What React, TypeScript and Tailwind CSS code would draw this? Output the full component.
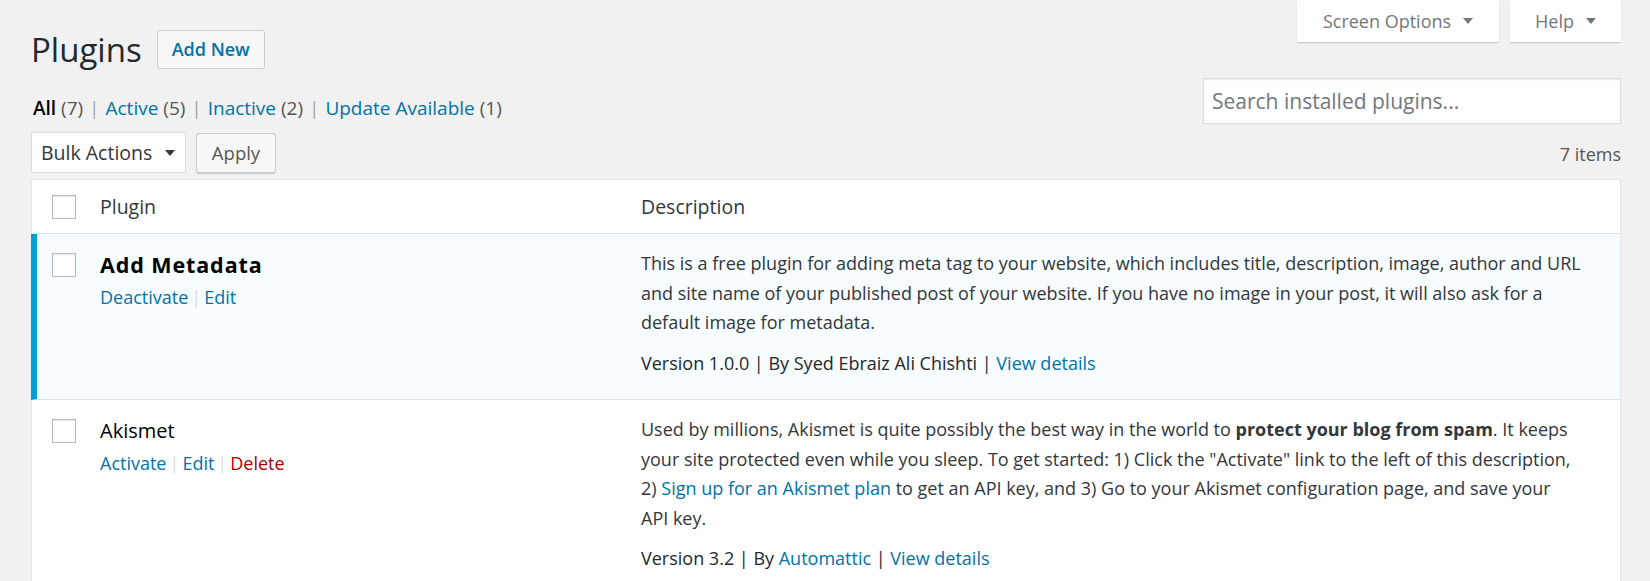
import React from 'react';

function Caret({ className = '' }: { className?: string }) {
  return (
    <svg viewBox="0 0 10 6" className={className} aria-hidden="true">
      <path d="M0 0h10L5 6z" fill="currentColor" />
    </svg>
  );
}

function Checkbox() {
  return (
    <span className="block h-[24px] w-[24px] border border-[#b4b9be] bg-white shadow-[inset_0_1px_2px_rgba(0,0,0,0.1)]" />
  );
}

function Tab({ label, width }: { label: string; width: string }) {
  return (
    <div
      className={`flex h-[42px] ${width} items-center justify-center gap-[12px] bg-white text-[18px] text-[#72777c] shadow-[0_1px_1px_rgba(0,0,0,0.15)]`}
    >
      <span>{label}</span>
      <Caret className="h-[6px] w-[10px] text-[#72777c]" />
    </div>
  );
}

const filters = [
  { label: 'All', count: 7, current: true },
  { label: 'Active', count: 5 },
  { label: 'Inactive', count: 2 },
  { label: 'Update Available', count: 1 },
];

type Action = { label: string; danger?: boolean };

function PluginRow({
  active,
  name,
  actions,
  children,
  meta,
}: {
  active?: boolean;
  name: string;
  actions: Action[];
  children: React.ReactNode;
  meta: React.ReactNode;
}) {
  return (
    <div
      className={
        active
          ? 'flex -ml-px border-b border-l-[6px] border-b-[#dde3e6] border-l-[#00a0d2] bg-[#f7fcfe] pt-[15px] pb-[21px]'
          : 'flex border-b border-[#e1e1e1] pt-[15px] pb-[21px]'
      }
    >
      <div className={active ? 'w-[63px] shrink-0 pl-[15px] pt-[4px]' : 'w-[68px] shrink-0 pl-[20px] pt-[4px]'}>
        <Checkbox />
      </div>
      <div className="w-[541px] shrink-0">
        <div
          className={
            active
              ? 'text-[21.5px] font-bold leading-[31px] tracking-[0.9px] text-[#000]'
              : 'text-[20px] leading-[31px] text-[#000]'
          }
        >
          {name}
        </div>
        <div className="mt-[3px] text-[18px] leading-[29px]">
          {actions.map((a, i) => (
            <React.Fragment key={a.label}>
              {i > 0 && <span className="mx-[3px] text-[#ddd]">|</span>}
              <a className={a.danger ? 'text-[#a00]' : 'text-[#0073aa]'}>{a.label}</a>
            </React.Fragment>
          ))}
        </div>
      </div>
      <div className="min-w-0 flex-1 whitespace-nowrap pr-[15px] text-[18px] leading-[29.5px] text-[#32373c]">
        <p>{children}</p>
        <p className="mt-[11px] text-[#23282d]">{meta}</p>
      </div>
    </div>
  );
}

export default function App() {
  return (
    <div className="min-h-screen bg-[#f1f1f1] pl-[31px] pr-[29px] font-['Open_Sans',sans-serif] text-[#32373c]">
      {/* Title and screen meta tabs */}
      <div className="flex items-start justify-between">
        <div className="mt-[30px] flex items-center">
          <h1 className="text-[33px] leading-[39px] text-[#23282d]">Plugins</h1>
          <button className="ml-[15px] h-[39px] rounded-[3px] border border-[#ccc] bg-[#f7f7f7] px-[14px] text-[18px] font-semibold text-[#0073aa]">
            Add New
          </button>
        </div>
        <div className="flex gap-[11px]">
          <Tab label="Screen Options" width="w-[202px]" />
          <Tab label="Help" width="w-[111px]" />
        </div>
      </div>

      {/* Filters and search */}
      <div className="mt-[9px] flex items-start justify-between">
        <ul className="ml-[2px] mt-[16px] flex text-[19px] leading-[29px] text-[#555]">
          {filters.map((f, i) => (
            <li key={f.label} className="whitespace-pre">
              {i > 0 && <span className="mx-[1px] text-[#a0a5aa]"> | </span>}
              {f.current ? (
                <span className="font-semibold text-[#000]">{f.label}</span>
              ) : (
                <a className="text-[#0073aa]">{f.label}</a>
              )}{' '}
              <span className="text-[#555]">({f.count})</span>
            </li>
          ))}
        </ul>
        <input
          type="search"
          placeholder="Search installed plugins..."
          className="h-[46px] w-[418px] border border-[#ddd] bg-white px-[8px] text-[21px] text-[#32373c] shadow-[inset_0_1px_2px_rgba(0,0,0,0.07)] outline-none placeholder:text-[#72777c]"
        />
      </div>

      {/* Bulk actions */}
      <div className="mt-[8px] flex items-center justify-between">
        <div className="flex items-center">
          <div className="flex h-[41px] w-[155px] items-center justify-between border border-[#ddd] bg-white pl-[9px] pr-[10px] text-[19.5px] text-[#32373c]">
            <span>Bulk Actions</span>
            <Caret className="h-[8px] w-[10px] text-[#32373c]" />
          </div>
          <button className="ml-[10px] h-[40px] w-[80px] rounded-[3px] border border-[#ccc] bg-[#f7f7f7] text-[18.5px] text-[#555] shadow-[0_1px_0_#ccc]">
            Apply
          </button>
        </div>
        <span className="pt-[4px] text-[18px] text-[#555]">7 items</span>
      </div>

      {/* Plugins table */}
      <div className="mt-[6px] border border-[#e5e5e5] bg-white shadow-[0_1px_1px_rgba(0,0,0,0.04)]">
        <div className="flex h-[54px] items-center border-b border-[#e1e1e1] text-[19.5px] text-[#32373c]">
          <div className="w-[68px] shrink-0 pl-[20px]">
            <Checkbox />
          </div>
          <div className="w-[541px] shrink-0">Plugin</div>
          <div>Description</div>
        </div>

        <PluginRow
          active
          name="Add Metadata"
          actions={[{ label: 'Deactivate' }, { label: 'Edit' }]}
          meta={
            <>
              Version 1.0.0 | By Syed Ebraiz Ali Chishti | <a className="text-[#0073aa]">View details</a>
            </>
          }
        >
          This is a free plugin for adding meta tag to your website, which includes title, description, image, author and URL
          <br />
          and site name of your published post of your website. If you have no image in your post, it will also ask for a
          <br />
          default image for metadata.
        </PluginRow>

        <PluginRow
          name="Akismet"
          actions={[{ label: 'Activate' }, { label: 'Edit' }, { label: 'Delete', danger: true }]}
          meta={
            <>
              Version 3.2 | By <a className="text-[#0073aa]">Automattic</a> | <a className="text-[#0073aa]">View details</a>
            </>
          }
        >
          Used by millions, Akismet is quite possibly the best way in the world to <strong>protect your blog from spam</strong>. It keeps
          <br />
          your site protected even while you sleep. To get started: 1) Click the "Activate" link to the left of this description,
          <br />
          2) <a className="text-[#0073aa]">Sign up for an Akismet plan</a> to get an API key, and 3) Go to your Akismet configuration page, and save your
          <br />
          API key.
        </PluginRow>
      </div>
    </div>
  );
}
